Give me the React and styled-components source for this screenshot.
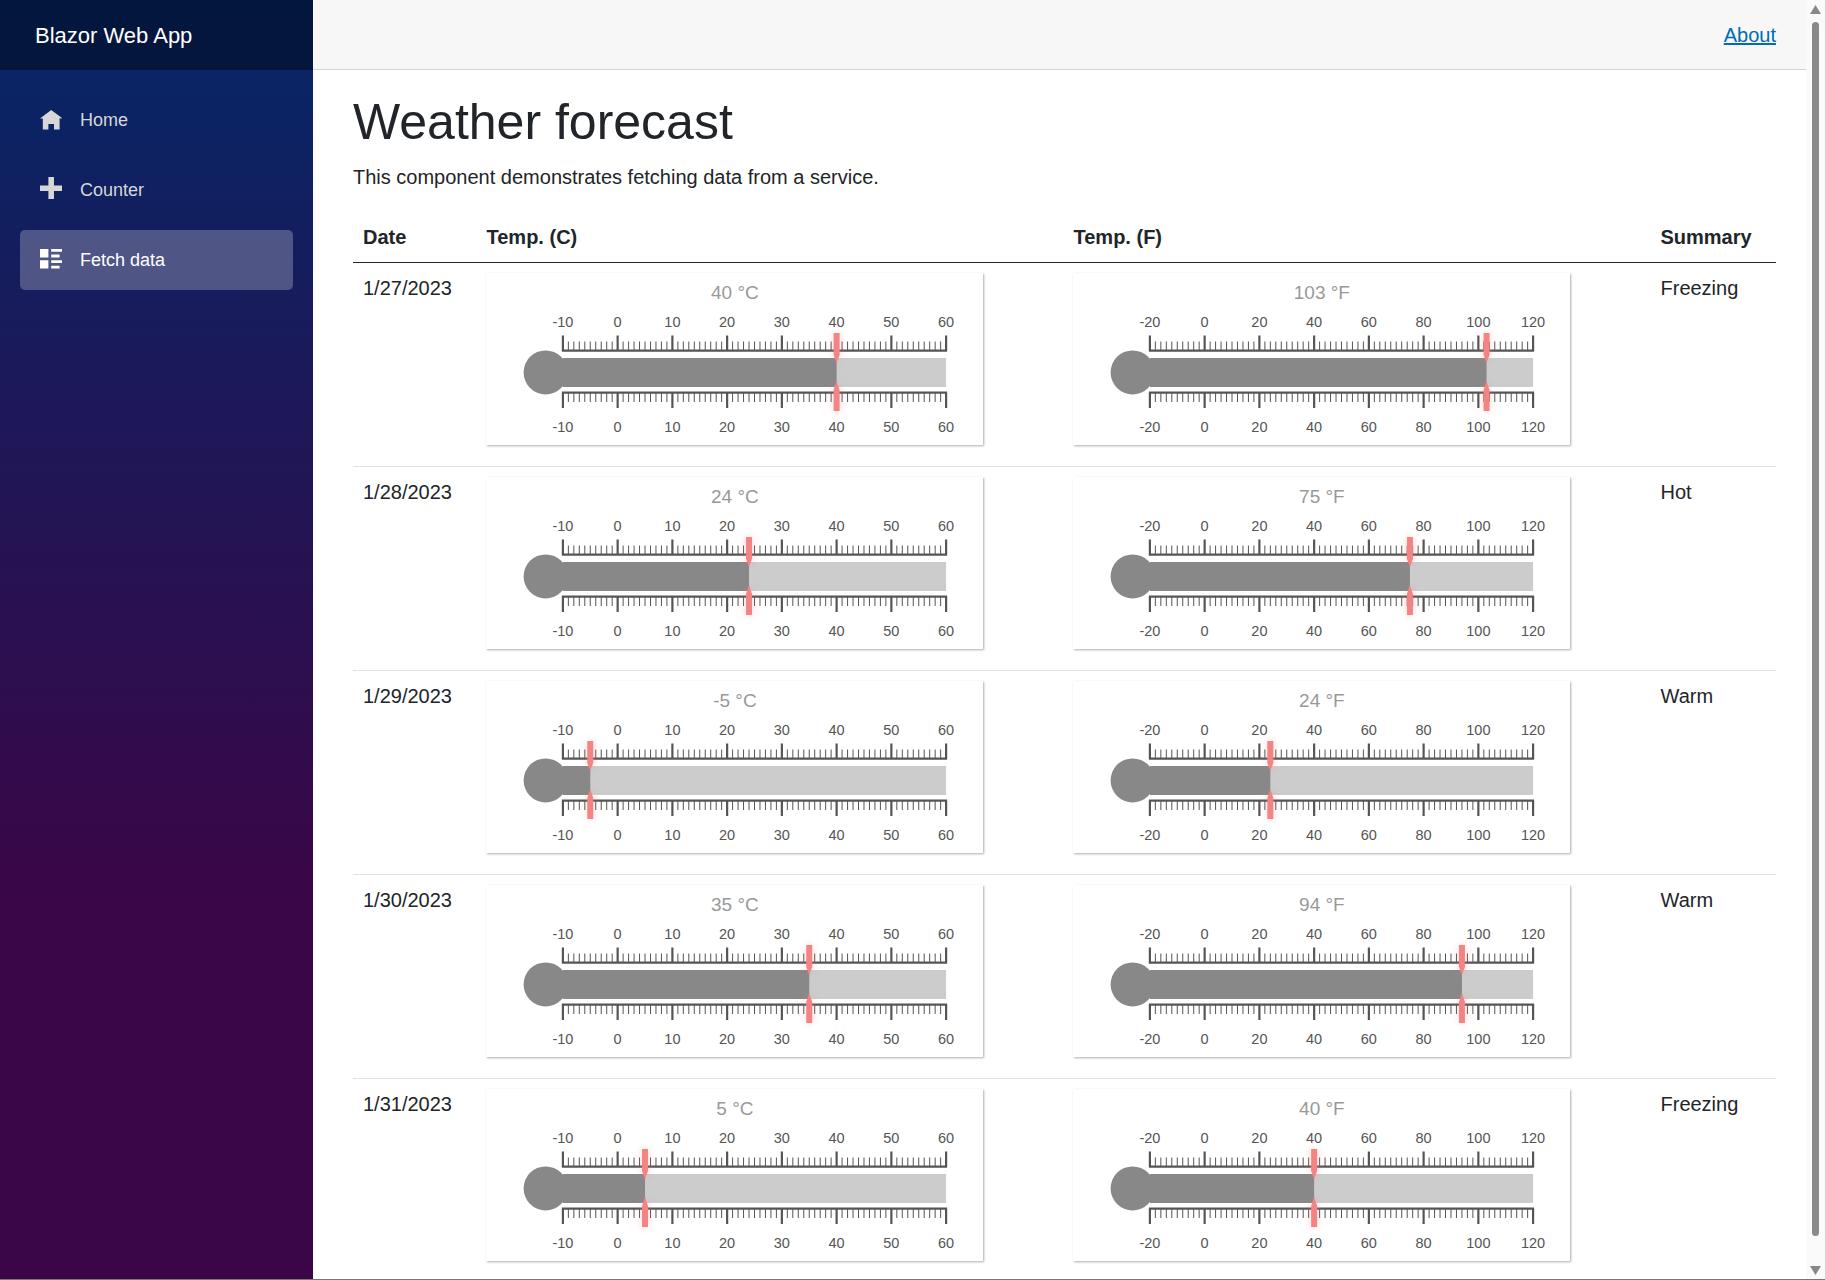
import React from "react";
import styled, { createGlobalStyle } from "styled-components";

const Global = createGlobalStyle`
  html, body { margin: 0; padding: 0; height: 100%; overflow: hidden; background: #fff; }
  body { font-family: "Liberation Sans", Arial, sans-serif; font-size: 20px; line-height: 30px; color: #212529; }
  * { box-sizing: border-box; }
`;

const Page = styled.div`
  display: flex;
  width: 1825px;
  height: 1280px;
  overflow: hidden;
  border-bottom: 1px solid #777;
`;
const Sidebar = styled.aside`
  flex: 0 0 313px;
  background-image: linear-gradient(180deg, rgb(5, 39, 103) 0%, #3a0647 70%);
`;
const Brand = styled.div`
  height: 70px;
  padding: 1px 0 0 35px;
  display: flex;
  align-items: center;
  background: rgba(0, 0, 0, 0.4);
  color: #fff;
  font-size: 22px;
`;
const Nav = styled.nav`
  display: flex;
  flex-direction: column;
  gap: 10px;
  padding: 20px 20px 0;
`;
const NavItem = styled.a`
  height: 60px;
  display: flex;
  align-items: center;
  padding-left: 20px;
  border-radius: 5px;
  font-size: 18px;
  color: ${(p) => (p.$active ? "#fff" : "#d7d7d7")};
  background: ${(p) => (p.$active ? "rgba(255,255,255,0.25)" : "transparent")};
`;
const NavIcon = styled.svg`
  width: 22.4px;
  height: 22.4px;
  margin-right: 17.6px;
  fill: currentColor;
  transform: translateY(${(p) => p.$shift}px);
`;
const Main = styled.main`
  flex: 1;
  min-width: 0;
`;
const TopRow = styled.header`
  height: 70px;
  display: flex;
  align-items: center;
  justify-content: flex-end;
  padding-right: 30px;
  background: #f7f7f7;
  border-bottom: 1px solid #d6d5d5;
`;
const AboutLink = styled.a`
  color: #006bb7;
  text-decoration: underline;
  font-size: 20px;
`;
const Content = styled.div`
  padding: 22px 30px 0 40px;
`;
const Title = styled.h1`
  margin: 0 0 10px;
  font-size: 50px;
  line-height: 60px;
  font-weight: 500;
`;
const Intro = styled.p`
  margin: 0 0 20px;
`;
const Table = styled.table`
  width: 1423px;
  table-layout: fixed;
  border-collapse: separate;
  border-spacing: 0;
`;
const Col = styled.col`
  width: ${(p) => p.$w}px;
`;
const Th = styled.th`
  padding: 10px;
  text-align: left;
  font-weight: 700;
  border-bottom: 1px solid #212529;
`;
const Td = styled.td`
  padding: 10px 10px 21px;
  vertical-align: top;
  border-bottom: 1px solid #dee2e6;
`;
const Card = styled.div`
  width: 497px;
  height: 172px;
  margin-left: -1px;
  background: #fff;
  box-shadow: 1px 1px 2px rgba(0, 0, 0, 0.32);
`;
const GaugeSvg = styled.svg`
  display: block;
  font-family: "Liberation Sans", Arial, sans-serif;
`;
const GaugeTitle = styled.text`
  font-size: 19px;
  fill: #999;
  text-anchor: middle;
`;
const Label = styled.text`
  font-size: 14.5px;
  fill: #555;
  text-anchor: middle;
`;
const Rule = styled.line`
  stroke: #555;
  stroke-width: ${(p) => (p.$major ? 2.2 : 1)};
`;
const Track = styled.rect`
  fill: ${(p) => (p.$fill ? "#888" : "#ccc")};
`;
const Bulb = styled.circle`
  fill: #888;
`;
const Marker = styled.polygon`
  fill: #f48484;
  filter: drop-shadow(0 0 4px rgba(244, 126, 130, 0.35));
`;
const Scrollbar = styled.div`
  flex: 0 0 19px;
  display: flex;
  flex-direction: column;
  align-items: center;
  background: #fafafa;
  padding: 5px 0 5px;
`;
const Arrow = styled.svg`
  flex: none;
  width: 11px;
  height: 9px;
  fill: #888;
`;
const Thumb = styled.div`
  flex: none;
  width: 7px;
  height: 1214px;
  margin: 8px 0 30px;
  border-radius: 4px;
  background: #8a8a8a;
`;

const X0 = 76.9;
const X1 = 460.1;
const Y_TOP = 77.7;
const Y_BOT = 119.7;

function Gauge({ value, min, max, unit }) {
  const scale = (v) => X0 + ((v - min) / (max - min)) * (X1 - X0);
  const x = scale(value);
  const ticks = Array.from({ length: 71 }, (_, i) => i);
  return (
    <Card>
      <GaugeSvg width="497" height="172" viewBox="0 0 497 172">
        <GaugeTitle x="248.9" y="25.5">{`${value} °${unit}`}</GaugeTitle>
        {ticks.map((i) => {
          const major = i % 10 === 0;
          const tx = X0 + (i / 70) * (X1 - X0);
          return (
            <g key={i}>
              <Rule $major={major} x1={tx} x2={tx} y1={major ? 62.5 : 68.5} y2={Y_TOP} />
              <Rule $major={major} x1={tx} x2={tx} y1={Y_BOT} y2={major ? 135 : 129} />
            </g>
          );
        })}
        <Rule $major x1={X0 - 1} x2={X1 + 1} y1={Y_TOP} y2={Y_TOP} />
        <Rule $major x1={X0 - 1} x2={X1 + 1} y1={Y_BOT} y2={Y_BOT} />
        {ticks
          .filter((i) => i % 10 === 0)
          .map((i) => {
            const tx = X0 + (i / 70) * (X1 - X0);
            const lab = min + (i / 70) * (max - min);
            return (
              <g key={i}>
                <Label x={tx} y="53.5">{lab}</Label>
                <Label x={tx} y="158.5">{lab}</Label>
              </g>
            );
          })}
        <Track x={X0} y="85" width={X1 - X0} height="29" />
        <Track $fill x={X0} y="85" width={x - X0} height="29" />
        <Bulb cx="59.6" cy="99.4" r="22" />
        <Marker points={`${x - 3},60 ${x + 3},60 ${x + 3},82 ${x},90 ${x - 3},82`} />
        <Marker points={`${x - 3},138 ${x + 3},138 ${x + 3},117 ${x},108 ${x - 3},117`} />
      </GaugeSvg>
    </Card>
  );
}

const rows = [
  ["1/27/2023", 40, 103, "Freezing"],
  ["1/28/2023", 24, 75, "Hot"],
  ["1/29/2023", -5, 24, "Warm"],
  ["1/30/2023", 35, 94, "Warm"],
  ["1/31/2023", 5, 40, "Freezing"],
];

const icons = {
  home: "M4 0l-4 3h1v4h2v-2h2v2h2v-4.03l1 .03-4-3z",
  plus: "M3 0v3h-3v2h3v3h2v-3h3v-2h-3v-3h-2z",
  list: "M0 0v3h3v-3h-3zm4 0v1h4v-1h-4zm0 2v1h3v-1h-3zm-4 2v3h3v-3h-3zm4 0v1h4v-1h-4zm0 2v1h3v-1h-3z",
};

export default function App() {
  return (
    <Page>
      <Global />
      <Sidebar>
        <Brand>Blazor Web App</Brand>
        <Nav>
          <NavItem>
            <NavIcon $shift={1} viewBox="0 0 8 8"><path d={icons.home} /></NavIcon>Home
          </NavItem>
          <NavItem>
            <NavIcon $shift={-2} viewBox="0 0 8 8"><path d={icons.plus} /></NavIcon>Counter
          </NavItem>
          <NavItem $active>
            <NavIcon $shift={0} viewBox="0 0 8 8"><path d={icons.list} /></NavIcon>Fetch data
          </NavItem>
        </Nav>
      </Sidebar>
      <Main>
        <TopRow>
          <AboutLink href="#">About</AboutLink>
        </TopRow>
        <Content>
          <Title>Weather forecast</Title>
          <Intro>This component demonstrates fetching data from a service.</Intro>
          <Table>
            <colgroup>
              <Col $w={123.5} />
              <Col $w={587} />
              <Col $w={587} />
              <Col $w={125.5} />
            </colgroup>
            <thead>
              <tr>
                <Th>Date</Th>
                <Th>Temp. (C)</Th>
                <Th>Temp. (F)</Th>
                <Th>Summary</Th>
              </tr>
            </thead>
            <tbody>
              {rows.map(([d, c, f, s]) => (
                <tr key={d}>
                  <Td>{d}</Td>
                  <Td><Gauge value={c} min={-10} max={60} unit="C" /></Td>
                  <Td><Gauge value={f} min={-20} max={120} unit="F" /></Td>
                  <Td>{s}</Td>
                </tr>
              ))}
            </tbody>
          </Table>
        </Content>
      </Main>
      <Scrollbar>
        <Arrow viewBox="0 0 11 9"><polygon points="5.5,0 11,9 0,9" /></Arrow>
        <Thumb />
        <Arrow viewBox="0 0 11 9"><polygon points="0,0 11,0 5.5,9" /></Arrow>
      </Scrollbar>
    </Page>
  );
}
